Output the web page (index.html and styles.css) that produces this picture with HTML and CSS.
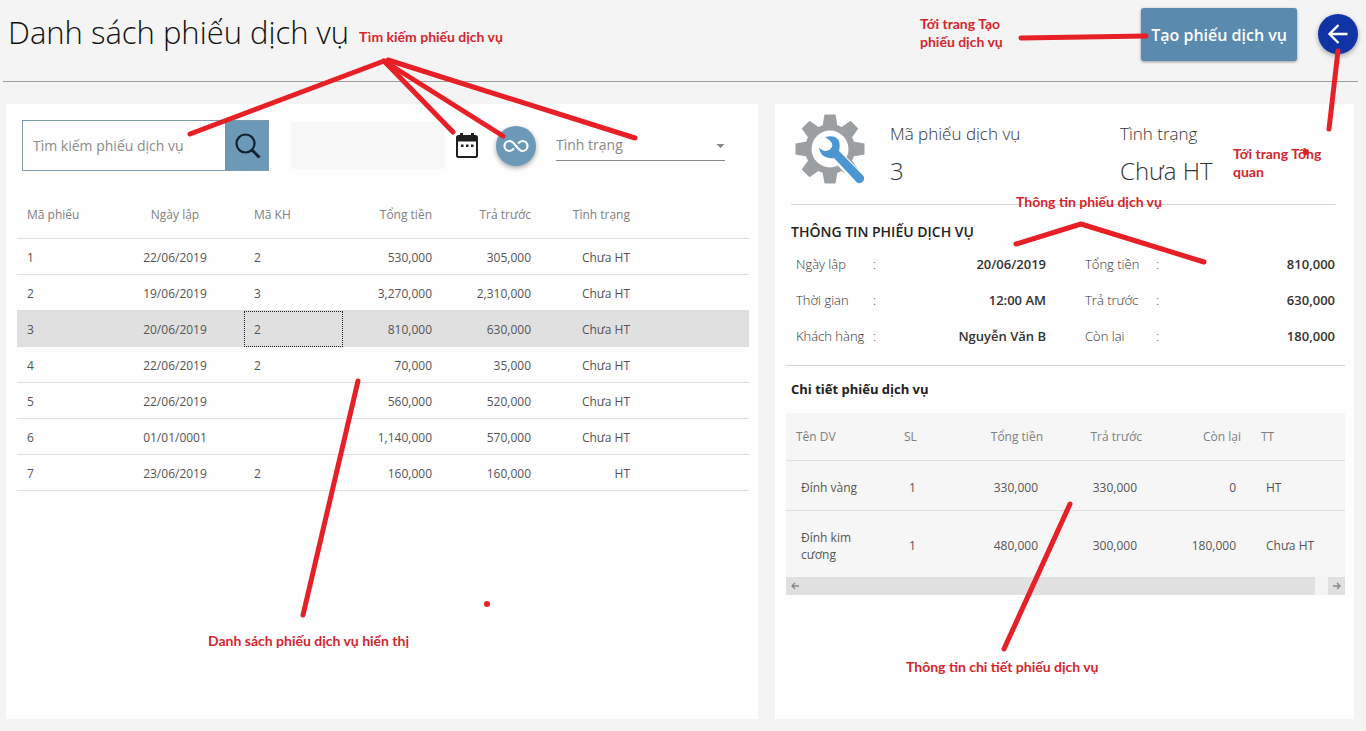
FILE: index.html
```html
<!DOCTYPE html>
<html lang="vi">
<head>
<meta charset="utf-8">
<meta name="viewport" content="width=device-width, initial-scale=1">
<title>Danh sách phiếu dịch vụ</title>
<link rel="stylesheet" href="styles.css">
</head>
<body>
<header class="topbar">
  <h1 class="title">Danh sách phiếu dịch vụ</h1>
  <button class="create" type="button">Tạo phiếu dịch vụ</button>
  <button class="round back" type="button" aria-label="Quay lại">
    <svg width="24" height="24" viewBox="0 0 24 24"><path d="M21.500 12H4M12.500 3L3.500 12L12.500 21" fill="none" stroke="#fff" stroke-width="2.400"/></svg>
  </button>
</header>

<main class="panels">
  <section class="panel list">
    <form class="filters">
      <div class="search">
        <input class="search-text" type="text" placeholder="Tìm kiếm phiếu dịch vụ" aria-label="Tìm kiếm phiếu dịch vụ">
        <button class="search-go" type="button" aria-label="Tìm kiếm">
          <svg width="28" height="28" viewBox="0 0 28 28"><g fill="none" stroke="#10222f"><circle cx="12.500" cy="11.500" r="9" stroke-width="2.200"/><path d="M19 18L26.500 25.500" stroke-width="3"/></g></svg>
        </button>
      </div>
      <input class="date" type="text" aria-label="Ngày lập">
      <button class="calendar" type="button" aria-label="Chọn ngày">
        <svg width="24" height="26" viewBox="0 0 24 26"><path fill="#1f1f1f" d="M5 0h3v2h8V0h3v2h1.500A2.500 2.500 0 0 1 23 4.500v18A2.500 2.500 0 0 1 20.500 25h-17A2.500 2.500 0 0 1 1 22.500v-18A2.500 2.500 0 0 1 3.500 2H5zM3 8.500V23h18V8.500zM6 11.500h2.500V14H6zm5 0h2.500V14H11zm5 0h2.500V14H16z"/></svg>
      </button>
      <button class="round all" type="button" aria-label="Tất cả">
        <svg width="26" height="14" viewBox="0 0 26 14"><path d="M11 9.500C9.500 11 8.500 12 6.500 12A5 5 0 0 1 6.500 2C9.500 2 11 4.500 13 7S16.500 12 19.500 12A5 5 0 0 0 19.500 2C17.500 2 16.500 3 15 4.500" fill="none" stroke="#fff" stroke-width="2.200"/></svg>
      </button>
      <select class="status" aria-label="Tình trạng"><option>Tình trạng</option></select>
    </form>

    <table class="grid tickets">
      <colgroup><col class="w-id"><col class="w-date"><col class="w-num"><col class="w-num"><col class="w-num"><col class="w-num"><col></colgroup>
      <thead><tr><th>Mã phiếu</th><th class="mid">Ngày lập</th><th>Mã KH</th><th class="num">Tổng tiền</th><th class="num">Trả trước</th><th class="num">Tình trạng</th><th></th></tr></thead>
      <tbody>
        <tr><td>1</td><td class="mid">22/06/2019</td><td>2</td><td class="num">530,000</td><td class="num">305,000</td><td class="num">Chưa HT</td><td></td></tr>
        <tr><td>2</td><td class="mid">19/06/2019</td><td>3</td><td class="num">3,270,000</td><td class="num">2,310,000</td><td class="num">Chưa HT</td><td></td></tr>
        <tr class="selected"><td>3</td><td class="mid">20/06/2019</td><td class="focused">2</td><td class="num">810,000</td><td class="num">630,000</td><td class="num">Chưa HT</td><td></td></tr>
        <tr><td>4</td><td class="mid">22/06/2019</td><td>2</td><td class="num">70,000</td><td class="num">35,000</td><td class="num">Chưa HT</td><td></td></tr>
        <tr><td>5</td><td class="mid">22/06/2019</td><td></td><td class="num">560,000</td><td class="num">520,000</td><td class="num">Chưa HT</td><td></td></tr>
        <tr><td>6</td><td class="mid">01/01/0001</td><td></td><td class="num">1,140,000</td><td class="num">570,000</td><td class="num">Chưa HT</td><td></td></tr>
        <tr><td>7</td><td class="mid">23/06/2019</td><td>2</td><td class="num">160,000</td><td class="num">160,000</td><td class="num">HT</td><td></td></tr>
      </tbody>
    </table>
  </section>

  <section class="panel detail">
    <div class="summary">
      <svg class="gear" width="70" height="70" viewBox="-35 -35 70 70" aria-hidden="true">
        <g fill="#9b9fa1">
          <circle r="25"/>
          <path id="tooth" d="M-7.500-23L-5.500-34.500H5.500L7.500-23V23L5.500 34.500H-5.500L-7.500 23z"/>
          <use href="#tooth" transform="rotate(45)"/>
          <use href="#tooth" transform="rotate(90)"/>
          <use href="#tooth" transform="rotate(135)"/>
        </g>
        <circle r="18.500" fill="#fefefe"/>
        <path d="M8 8L30 31" stroke="#fefefe" stroke-width="12"/>
        <path fill="#4b96d1" d="M-5-11.500C0-14 6-13 8.500-9C10-6 10-2 9 2L33.500 27C36 31 31 36 27 33.500L4 9C-3 10-10 7-11-1.500C-8 2-4 3 0 .500C4-3 3-8-5-11.500z"/>
      </svg>
      <div class="fact"><span class="fact-name">Mã phiếu dịch vụ</span><span class="fact-value">3</span></div>
      <div class="fact"><span class="fact-name">Tình trạng</span><span class="fact-value">Chưa HT</span></div>
    </div>
    <h2 class="heading info-heading">THÔNG TIN PHIẾU DỊCH VỤ</h2>
    <div class="info">
      <dl class="pairs">
        <dt>Ngày lập</dt><dd>20/06/2019</dd>
        <dt>Thời gian</dt><dd>12:00 AM</dd>
        <dt>Khách hàng</dt><dd>Nguyễn Văn B</dd>
      </dl>
      <dl class="pairs">
        <dt>Tổng tiền</dt><dd>810,000</dd>
        <dt>Trả trước</dt><dd>630,000</dd>
        <dt>Còn lại</dt><dd>180,000</dd>
      </dl>
    </div>
    <h2 class="heading services-heading">Chi tiết phiếu dịch vụ</h2>
    <table class="grid services">
      <colgroup><col class="w-name"><col class="w-qty"><col class="w-num"><col class="w-num"><col class="w-num"><col></colgroup>
      <thead><tr><th>Tên DV</th><th>SL</th><th class="num">Tổng tiền</th><th class="num">Trả trước</th><th class="num">Còn lại</th><th>TT</th></tr></thead>
      <tbody>
        <tr><td>Đính vàng</td><td>1</td><td class="num">330,000</td><td class="num">330,000</td><td class="num">0</td><td>HT</td></tr>
        <tr><td>Đính kim cương</td><td>1</td><td class="num">480,000</td><td class="num">300,000</td><td class="num">180,000</td><td>Chưa HT</td></tr>
      </tbody>
    </table>
    <div class="scroller">
      <button class="scroll-step" type="button" aria-label="Cuộn trái"><svg width="8" height="8" viewBox="0 0 8 8"><path d="M8 4H1M4 1L1 4L4 7" fill="none" stroke="#888" stroke-width="1.300"/></svg></button>
      <div class="scroll-thumb"></div>
      <button class="scroll-step" type="button" aria-label="Cuộn phải"><svg width="8" height="8" viewBox="0 0 8 8"><path d="M0 4H7M4 1L7 4L4 7" fill="none" stroke="#888" stroke-width="1.300"/></svg></button>
    </div>
  </section>
</main>

<div class="notes">
  <svg class="strokes" width="1366" height="731" viewBox="0 0 1366 731" aria-hidden="true">
    <g fill="none" stroke="#e71f27" stroke-width="5" stroke-linecap="round" stroke-linejoin="round">
      <path d="M190 134L384 61L453 132"/>
      <path d="M384 61L503 136"/>
      <path d="M388 60L635 138"/>
      <path d="M1021 38L1146 36"/>
      <path d="M1338 51L1329 129"/>
      <path d="M1016 244L1081 224L1204 262"/>
      <path d="M358 381L303 615"/>
      <path d="M1070 504L1004 649"/>
    </g>
    <g fill="#e71f27"><circle cx="1306" cy="152" r="3"/><circle cx="487" cy="604" r="3"/></g>
  </svg>
  <p class="note n-search">Tìm kiếm phiếu dịch vụ</p>
  <p class="note n-create">Tới trang Tạo<br>phiếu dịch vụ</p>
  <p class="note n-home">Tới trang Tổng<br>quan</p>
  <p class="note n-info">Thông tin phiếu dịch vụ</p>
  <p class="note n-list">Danh sách phiếu dịch vụ hiển thị</p>
  <p class="note n-services">Thông tin chi tiết phiếu dịch vụ</p>
</div>
</body>
</html>
```

FILE: styles.css
```css
* { box-sizing: border-box; }

body {
  position: relative;
  display: flex;
  flex-direction: column;
  min-height: 100vh;
  margin: 0;
  background: #f4f4f4;
  color: #555;
  font: 12px/16px "Open Sans", "Noto Sans", sans-serif;
}

button, input, select { font: inherit; color: inherit; border: 0; padding: 0; margin: 0; }
button { display: flex; align-items: center; justify-content: center; background: none; flex: none; cursor: pointer; }
h1, h2, p, dl, dd { margin: 0; }

.topbar {
  display: flex;
  align-items: flex-start;
  margin: 0 8px 0 3px;
  padding: 8px 0 20px 5px;
  border-bottom: 1px solid #999f9c;
}
.title { flex: 1; color: #111; font-size: 31px; line-height: 48px; font-weight: 300; }
.create {
  height: 53px;
  padding: 0 10px;
  border-radius: 3px;
  background: #5a8bae;
  box-shadow: 0 1px 3px rgba(0, 0, 0, .4);
  color: #fff;
  font-size: 16px;
  font-weight: 600;
}
.round { width: 40px; height: 40px; border-radius: 50%; box-shadow: 0 2px 5px rgba(0, 0, 0, .35); }
.back { margin: 6px 0 0 21px; background: #1034a6; }

.panels {
  flex: 1;
  display: grid;
  grid-template-columns: 752fr 579fr;
  gap: 17px;
  padding: 22px 12px 12px 6px;
}
.panel { background: #fefefe; }
.list { padding: 16px 9px 16px 11px; }
.detail { padding: 10px 9px 16px 11px; }

.filters { display: flex; align-items: center; padding: 0 24px 0 5px; }
.search { display: flex; width: 247px; height: 51px; border: 1px solid #7f9caf; }
.search-text { flex: 1; min-width: 0; padding: 0 10px; background: transparent; font-size: 14px; }
.search-text::placeholder { color: #8c8c8c; opacity: 1; }
.search-go { width: 43px; background: #6d99b9; }
.date { width: 154px; height: 47px; margin: 0 9px 0 22px; background: #f8f8f8; }
.calendar { width: 26px; height: 26px; }
.all { margin: 0 20px 0 16px; background: #6d99b9; }
.status {
  flex: 1;
  min-width: 0;
  height: 30px;
  appearance: none;
  border-bottom: 1px solid #888;
  border-radius: 0;
  background: linear-gradient(to bottom right, #888 50%, transparent 50%) right 0 top 13px / 4px 4px no-repeat,
    linear-gradient(to bottom left, #888 50%, transparent 50%) right 4px top 13px / 4px 4px no-repeat;
  color: #888;
  font-size: 14px;
  line-height: 24px;
}

.grid { width: 100%; table-layout: fixed; border-collapse: separate; border-spacing: 0; }
.grid th, .grid td { padding: 0 10px; border-bottom: 1px solid #dedede; text-align: left; }
.grid th { height: 48px; color: #808080; font-weight: 500; }
.grid .num { text-align: right; }
.grid .mid { text-align: center; }
.w-id { width: 89px; }
.w-date { width: 138px; }
.w-num { width: 99px; }
.w-name { width: 108px; }
.w-qty { width: 60px; }

.tickets { margin-top: 20px; }
.tickets td { height: 36px; padding-top: 3px; }
.tickets .selected td { background: #e0e0e0; }
.tickets .focused { outline: 1px dotted #222; outline-offset: -1px; }

.summary {
  display: grid;
  grid-template-columns: 95px 230px 1fr;
  margin: 0 10px 0 5px;
  padding-left: 4px;
  height: 91px;
  border-bottom: 1px solid #d4d4d4;
}
.fact { display: flex; flex-direction: column; padding-top: 6px; color: #333; font-weight: 300; }
.fact-name { font-size: 17px; line-height: 28px; }
.fact-value { font-size: 24px; line-height: 36px; margin-top: 5px; }

.heading { margin: 0 5px; color: #222; font-size: 13px; line-height: 20px; font-weight: 700; }
.info-heading { margin-top: 17px; font-size: 14px; font-weight: 600; }
.info {
  display: grid;
  grid-template-columns: 1fr 1fr;
  gap: 39px;
  padding: 4px 10px 11px;
  border-bottom: 1px solid #d4d4d4;
}
.pairs { display: grid; grid-template-columns: 80px 1fr; grid-auto-rows: 36px; align-items: center; }
.pairs dt { display: flex; justify-content: space-between; color: #333; font-size: 13px; font-weight: 300; }
.pairs + .pairs { grid-template-columns: 74px 1fr; }
.pairs dt::after { content: ":"; }
.pairs dd { color: #333; font-size: 13px; font-weight: 600; text-align: right; }

.services-heading { margin-top: 13px; }
.services { margin-top: 14px; background: #f6f6f6; }
.services td { height: 50px; padding: 3px 15px 0; line-height: 17px; }
.services tr:last-child td { height: 66px; border-bottom: 0; }

.scroller { display: flex; background: #f4f4f4; }
.scroll-step { width: 17px; height: 18px; background: #e0e0e0; }
.scroll-thumb { flex: 1; margin-right: 13px; background: #e0e0e0; }

/* Red callouts drawn over the screen */
.notes { position: absolute; inset: 0; overflow: hidden; pointer-events: none; }
.strokes { position: absolute; left: 0; top: 0; }
.note { position: absolute; color: #d3262e; font: 700 14px/18px Lato, "Open Sans", sans-serif; white-space: nowrap; }
.n-search { left: 359px; top: 28px; }
.n-create { left: 920px; top: 15px; }
.n-home { left: 1233px; top: 145px; }
.n-info { left: 1016px; top: 193px; }
.n-list { left: 208px; top: 632px; }
.n-services { left: 906px; top: 658px; }
```
